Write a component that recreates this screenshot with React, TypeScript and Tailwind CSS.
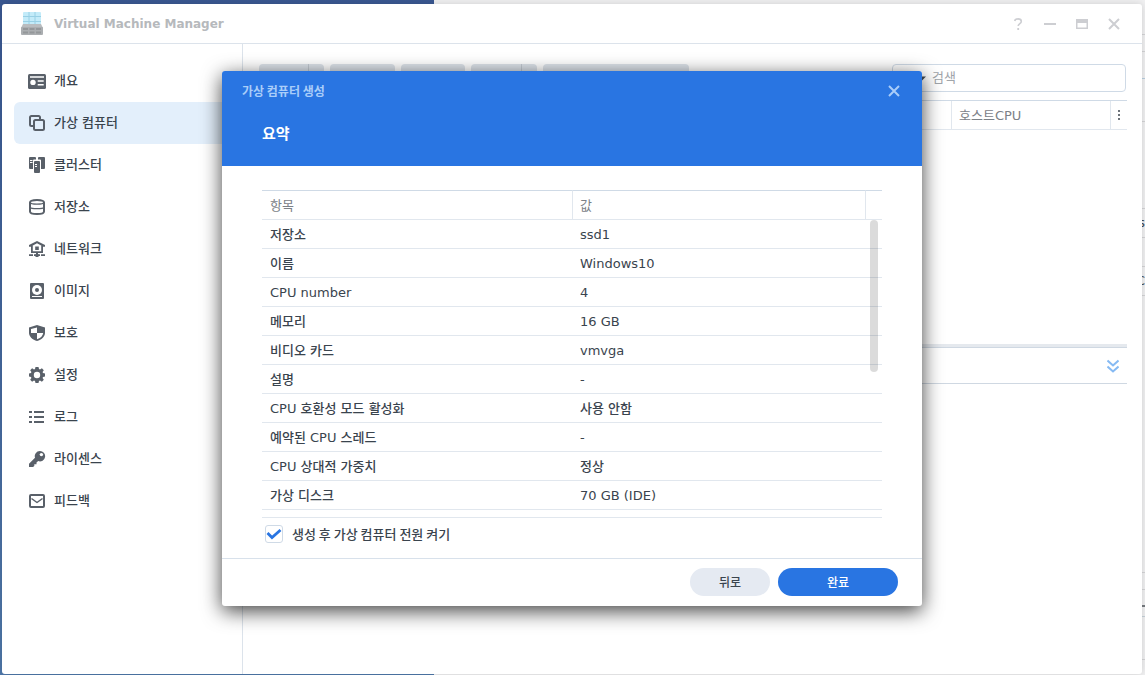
import { useState, type ReactNode } from "react";

type MenuItem = {
  label: string;
  icon: ReactNode;
};

const WHITE = "#fff";

const menu: MenuItem[] = [
  {
    label: "개요",
    icon: (
      <>
        <rect x="0" y="2" width="18" height="15" rx="1.5" />
        <path fill={WHITE} d="M2 4.3h14v1.4H2zM9.7 8.3h6v1.4h-6zM9.7 12h6v1.4h-6z" />
        <circle fill={WHITE} cx="5" cy="10.4" r="2.7" />
      </>
    ),
  },
  {
    label: "가상 컴퓨터",
    icon: (
      <g fill="none" stroke="currentColor" strokeWidth="2">
        <path d="M5 12H3.5A1.5 1.5 0 0 1 2 10.5V3.5A1.5 1.5 0 0 1 3.5 2H10.5A1.5 1.5 0 0 1 12 3.5V5" />
        <rect x="6" y="6" width="10" height="10" rx="1.5" />
      </g>
    ),
  },
  {
    label: "클러스터",
    icon: (
      <>
        <path d="M2 1h5a1 1 0 0 1 1 1v1.5H6a1 1 0 0 0-1 1V13H2a1 1 0 0 1-1-1V2a1 1 0 0 1 1-1z" />
        <path d="M11 1h5a1 1 0 0 1 1 1v10a1 1 0 0 1-1 1h-3V4.5a1 1 0 0 0-1-1h-2V2a1 1 0 0 1 1-1z" />
        <rect x="6" y="5" width="6" height="12" rx="1" />
        <path fill={WHITE} d="M2 4h2.5v1H2zM2 6h2.5v1H2zM7 8h2v1H7zM7 10h2v1H7z" />
      </>
    ),
  },
  {
    label: "저장소",
    icon: (
      <g fill="none" stroke="currentColor">
        <path strokeWidth="2" d="M2 4.5C2 2.5 4 2 9 2s7 .5 7 2.5v9c0 2-2 2.500-7 2.500s-7-.5-7-2.500z" />
        <path strokeWidth="1.3" d="M2 4.5c.5 1.2 3 1.6 7 1.6s6.500-.4 7-1.600M2 9.200c.5 1.100 3 1.500 7 1.500s6.500-.4 7-1.500" />
      </g>
    ),
  },
  {
    label: "네트워크",
    icon: (
      <>
        <path d="M9 1l8 4v1.8h-1.700L9 3.300 2.700 6.800H1V5z" />
        <path fill="none" stroke="currentColor" strokeWidth="1.8" d="M3.9 5.5v6.600h10.200V5.500" />
        <path d="M7.200 6.500h3.600v3.600H7.200zM8 12.500h2v2H8zM1 14.300h4v1.700H1zM6 14.300h6V16H6zM13 14.300h4V16h-4zM7.500 14h3v3h-3z" />
      </>
    ),
  },
  {
    label: "이미지",
    icon: (
      <>
        <rect x="2" y="1" width="14" height="16" rx="1" />
        <circle fill={WHITE} cx="9" cy="8" r="5" />
        <circle cx="9" cy="8" r="2" />
        <path fill={WHITE} d="M4 14h10v1H4z" />
      </>
    ),
  },
  {
    label: "보호",
    icon: (
      <>
        <path d="M9 1l8 2.500v5.200c0 4-3.600 7.200-8 8.300-4.400-1.100-8-4.300-8-8.300V3.500z" />
        <path fill={WHITE} d="M9 9h6.200c-.3 3-2.900 5.300-6.200 6.200zM9 3.500V9H3V5z" />
      </>
    ),
  },
  {
    label: "설정",
    icon: (
      <path
        fillRule="evenodd"
        d="M7.500 1h3l.5 2.100 1 .4 1.900-1.200 1.900 1.900L14.600 6l.4 1 2 .5v3l-2 .5-.4 1 1.200 1.800-1.900 1.900L12 14.500l-1 .4-.5 2.100h-3L7 14.900l-1-.4-1.900 1.200-1.900-1.900L3.400 12 3 11l-2-.5v-3L3 7l.4-1-1.200-1.800 1.900-1.900L6 3.500l1-.4zM9 5.800a3.200 3.200 0 1 0 0 6.400 3.200 3.200 0 0 0 0-6.400z"
      />
    ),
  },
  {
    label: "로그",
    icon: <path d="M1 3h3v2H1zM6 3h10v2H6zM1 8h3v2H1zM6 8h10v2H6zM1 13h3v2H1zM6 13h10v2H6z" />,
  },
  {
    label: "라이센스",
    icon: (
      <>
        <path d="M11.800 1a5.200 5.200 0 1 1-1.600 10.100L8.500 12.500v1.700H6.300V16L5 17H1v-3.200l6-6A5.200 5.200 0 0 1 11.800 1z" />
        <circle fill={WHITE} cx="13.4" cy="4.6" r="1.7" />
      </>
    ),
  },
  {
    label: "피드백",
    icon: (
      <g fill="none" stroke="currentColor" strokeLinejoin="round">
        <rect x="2" y="3" width="14" height="12" rx="1" strokeWidth="2" />
        <path strokeWidth="1.5" d="M3.500 6.500L9 10.500l5.500-4" />
      </g>
    ),
  },
];

const summary: [string, string][] = [
  ["저장소", "ssd1"],
  ["이름", "Windows10"],
  ["CPU number", "4"],
  ["메모리", "16 GB"],
  ["비디오 카드", "vmvga"],
  ["설명", "-"],
  ["CPU 호환성 모드 활성화", "사용 안함"],
  ["예약된 CPU 스레드", "-"],
  ["CPU 상대적 가중치", "정상"],
  ["가상 디스크", "70 GB (IDE)"],
];

function AppLogo() {
  return (
    <svg className="h-6 w-6" viewBox="0 0 24 24" aria-hidden="true">
      <rect x="3" y="0" width="18" height="14" rx="1" fill="#c3ebf9" />
      <path d="M9 0v12M15 0v12M3 4.500h18M3 9.500h18" stroke="#98d0e5" strokeWidth="1" />
      <path d="M3 12h18l2 4H1z" fill="#b9bcbf" />
      <rect x="1" y="15" width="22" height="8" rx="1" fill="#abaeb1" />
      <path d="M3 16h5v2H3zM9.500 16h5v2h-5zM16 16h5v2h-5zM3 19.500h5v2H3zM9.500 19.500h5v2h-5zM16 19.500h5v2h-5z" fill="#94979a" />
    </svg>
  );
}

function CloseIcon() {
  return (
    <svg className="h-3 w-3" viewBox="0 0 12 12" aria-hidden="true">
      <path d="M1 1l10 10M11 1L1 11" fill="none" stroke="currentColor" strokeWidth="2" />
    </svg>
  );
}

function Desktop() {
  return (
    <div className="absolute inset-0 flex">
      <div className="w-[434px] bg-linear-to-b from-[#3a5892] to-[#4f78aa]" />
      <div className="flex flex-1 flex-col items-end bg-[#f1f1f2] text-[13px] text-[#414b55]">
        <div className="h-[35px] w-5 border-b border-[#d5d5d7]" />
        <div className="h-[17px] w-5 border-b border-[#d5d5d7]" />
        <div className="h-[27px] w-5 border-b border-[#b9cfdf]" />
        <div className="h-[43px] w-5 border-b border-[#d5d5d7]" />
        <div className="h-[87px] w-5 border-b border-[#d5d5d7]" />
        <div className="h-[29px] w-5 overflow-hidden border-b border-[#d5d5d7] pt-1 text-right">ss</div>
        <div className="h-[29px] w-5 border-b border-[#d5d5d7]" />
        <div className="h-[29px] w-5 overflow-hidden border-b border-[#d5d5d7] pt-1 text-right">C</div>
        <div className="h-[277px] w-5 border-b border-[#d5d5d7]" />
        <div className="h-[17px] w-5 border-b border-[#d5d5d7]" />
        <div className="h-[17px] w-5 border-b-2 border-[#777b80]" />
        <div className="h-[10px] w-5 border-b border-[#c7d2da]" />
        <div className="h-[43px] w-5 border-b border-[#d5d5d7]" />
      </div>
    </div>
  );
}

function TitleBar() {
  return (
    <header className="flex h-10 shrink-0 items-center border-b border-[#dce3eb] pr-[22px] pl-[18px]">
      <AppLogo />
      <h1 className="ml-[10px] flex-1 text-[12px] font-bold text-[#b6b9bc]">Virtual Machine Manager</h1>
      <div className="flex items-center gap-5 text-[#cdced2]">
        <button aria-label="도움말">
          <svg className="h-3 w-3" viewBox="0 0 12 12" aria-hidden="true">
            <path d="M2.700 3C3 1.500 4.200.9 6 .9c2 0 3.300.8 3.300 2.500C9.300 5.500 6.200 5.600 6.200 8" fill="none" stroke="currentColor" strokeWidth="1.600" />
            <path d="M5.300 10h1.800v2H5.300z" fill="currentColor" />
          </svg>
        </button>
        <button aria-label="최소화">
          <svg className="h-3 w-3" viewBox="0 0 12 12" aria-hidden="true">
            <path d="M0 5h12v2H0z" fill="currentColor" />
          </svg>
        </button>
        <button aria-label="최대화">
          <svg className="h-3 w-3" viewBox="0 0 12 12" aria-hidden="true">
            <path fillRule="evenodd" d="M0 1h12v10H0zM1.500 5v4.500h9V5z" fill="currentColor" />
          </svg>
        </button>
        <button aria-label="닫기">
          <CloseIcon />
        </button>
      </div>
    </header>
  );
}

function Sidebar() {
  return (
    <nav className="w-[241px] shrink-0 border-r border-[#dce3eb] px-3 pt-4">
      {menu.map((item) => (
        <button
          key={item.label}
          className={`flex h-[42px] w-full items-center gap-2 rounded-md pl-[14px] text-[13px] font-medium ${
            item.label === "가상 컴퓨터" ? "bg-[#e3effb]" : ""
          }`}
        >
          <svg className="h-[18px] w-[18px] text-[#596069]" viewBox="0 0 18 18" fill="currentColor" aria-hidden="true">
            {item.icon}
          </svg>
          {item.label}
        </button>
      ))}
    </nav>
  );
}

function MainPanel() {
  return (
    <main className="min-w-0 flex-1 pt-5 pr-[15px] pl-4">
      <div className="flex gap-[6px] pr-px">
        <button aria-label="생성" className="flex h-7 w-[65px] justify-end rounded bg-[#dde3ea]">
          <span className="h-7 w-4 border-l border-[#c3cad2]" />
        </button>
        <button aria-label="편집" className="h-7 w-[65px] rounded bg-[#dde3ea]" />
        <button aria-label="연결" className="h-7 w-16 rounded bg-[#dde3ea]" />
        <button aria-label="전원" className="flex h-7 w-[66px] justify-end rounded bg-[#dde3ea]">
          <span className="h-7 w-4 border-l border-[#c3cad2]" />
        </button>
        <button aria-label="동작" className="h-7 w-[146px] rounded bg-[#dde3ea]" />
        <div className="ml-auto flex h-7 w-[234px] items-center rounded border border-[#cfdae6] pl-2">
          <svg className="h-4 w-[26px] shrink-0" viewBox="0 0 26 16" aria-hidden="true">
            <circle cx="6" cy="9" r="3.500" fill="none" stroke="#414b55" strokeWidth="1.500" />
            <path d="M8.500 11.500l3 3" stroke="#414b55" strokeWidth="1.500" />
            <path d="M17 6.500h8l-4 4z" fill="#414b55" />
          </svg>
          <input
            aria-label="검색"
            placeholder="검색"
            className="ml-[5px] min-w-0 flex-1 text-[13px] outline-none placeholder:text-[#a0a5aa]"
          />
        </div>
      </div>

      <div className="mt-2 h-[244px]">
        <div className="flex h-[30px] items-center border-y border-t-[#cfdae6] border-b-[#e1e7ee] text-[13px] text-[#7c8187]">
          <div className="flex-1" />
          <div className="flex h-full w-[159px] items-center border-l border-[#e1e7ee] pt-[2px] pl-[7px]">호스트CPU</div>
          <button aria-label="열 선택" className="flex h-full w-[17px] items-center justify-center border-l border-[#e1e7ee]">
            <svg className="h-3 w-1" viewBox="0 0 4 12" fill="#6d737a" aria-hidden="true">
              <path d="M1 1h2v2H1zM1 5h2v2H1zM1 9h2v2H1z" />
            </svg>
          </button>
        </div>
      </div>

      <div className="h-10 border-t-[3px] border-b border-t-[#e5e9ee] border-b-[#cfd8e2]">
        <div className="flex h-9 items-center justify-end border-t border-[#cfd8e2] pr-2">
          <button aria-label="세부 정보 숨기기">
            <svg className="h-[14px] w-3" viewBox="0 0 12 14" fill="none" stroke="#86baf3" strokeWidth="2" aria-hidden="true">
              <path d="M.5 1.500L6 6.500l5.500-5M.5 7.500L6 12.500l5.500-5" />
            </svg>
          </button>
        </div>
      </div>
    </main>
  );
}

function SummaryDialog() {
  const [powerOn, setPowerOn] = useState(true);

  return (
    <div
      role="dialog"
      aria-labelledby="wizard-title"
      className="flex w-[700px] flex-col overflow-hidden rounded-[3px] bg-white shadow-[0_5px_20px_rgba(0,0,0,0.75)]"
    >
      <div className="h-[95px] bg-[#2975e2] px-5 pt-[10px]">
        <div className="flex h-5 items-center justify-between text-[#a9cdf9]">
          <h2 id="wizard-title" className="font-['Noto_Sans_CJK_KR',sans-serif] text-[12px] font-bold">
            가상 컴퓨터 생성
          </h2>
          <button aria-label="닫기" className="mr-[2px]">
            <CloseIcon />
          </button>
        </div>
        <h3 className="mt-5 pl-5 text-[15px] leading-[26px] font-bold text-white">요약</h3>
      </div>

      <div className="px-10 pt-6">
        <div className="relative h-[328px] overflow-hidden border-b border-[#e1e7ee]">
          <table className="w-full table-fixed border-separate border-spacing-0 text-left text-[13px]">
            <thead className="text-[#7c8187]">
              <tr className="h-[30px]">
                <th className="w-[310px] border-y border-t-[#cfdae6] border-b-[#e1e7ee] px-2 pt-[2px] font-normal">항목</th>
                <th className="border-y border-l border-t-[#cfdae6] border-b-[#e1e7ee] border-l-[#e1e7ee] px-[7px] pt-[2px] font-normal">값</th>
                <th className="w-[17px] border-y border-l border-t-[#cfdae6] border-b-[#e1e7ee] border-l-[#e1e7ee]" />
              </tr>
            </thead>
            <tbody className="font-medium">
              {summary.map(([name, value]) => (
                <tr key={name} className="h-[29px]">
                  <td className="border-b border-[#e1e7ee] px-2 pt-[2px]">{name}</td>
                  <td colSpan={2} className="border-b border-[#e1e7ee] px-2 pt-[2px]">
                    {value}
                  </td>
                </tr>
              ))}
            </tbody>
          </table>
          <div className="absolute top-[30px] right-1 h-[152px] w-2 rounded-full bg-black/14" />
        </div>

        <label className="flex h-10 items-start gap-[9px] pt-[7px] pl-[3px] font-['Noto_Sans_CJK_KR',sans-serif] text-[13px] leading-[18px] font-medium">
          <span className="relative flex">
            <input
              type="checkbox"
              checked={powerOn}
              onChange={(e) => setPowerOn(e.target.checked)}
              className="h-[18px] w-[18px] appearance-none rounded-[3px] border border-[#cfdae6]"
            />
            {powerOn && (
              <svg className="pointer-events-none absolute inset-0 h-[18px] w-[18px]" viewBox="0 0 18 18" aria-hidden="true">
                <path d="M2.500 8l4.500 4.500L15.500 5" fill="none" stroke="#2975e2" strokeWidth="2.800" />
              </svg>
            )}
          </span>
          생성 후 가상 컴퓨터 전원 켜기
        </label>
      </div>

      <div className="flex h-12 justify-end gap-2 border-t border-[#d8e1eb] pt-[9px] pr-6 text-[12px] font-medium">
        <button className="h-7 w-20 rounded-full bg-[#e5eaf2] pt-[2px]">뒤로</button>
        <button className="h-7 w-[120px] rounded-full bg-[#2975e2] pt-[2px] text-white">완료</button>
      </div>
    </div>
  );
}

export default function App() {
  return (
    <div className="relative h-screen overflow-hidden pt-1 pr-[3px] pb-px pl-[2px] font-['DejaVu_Sans','Noto_Sans_CJK_KR',sans-serif] text-[#3a444e]">
      <Desktop />

      <div className="relative flex h-full flex-col overflow-hidden rounded-[3px] bg-white shadow-[0_0_8px_rgba(0,0,0,0.15)]">
        <TitleBar />
        <div className="flex min-h-0 flex-1">
          <Sidebar />
          <MainPanel />
        </div>

        <div className="absolute inset-0 flex items-center justify-center pb-[2px]">
          <SummaryDialog />
        </div>
      </div>
    </div>
  );
}
